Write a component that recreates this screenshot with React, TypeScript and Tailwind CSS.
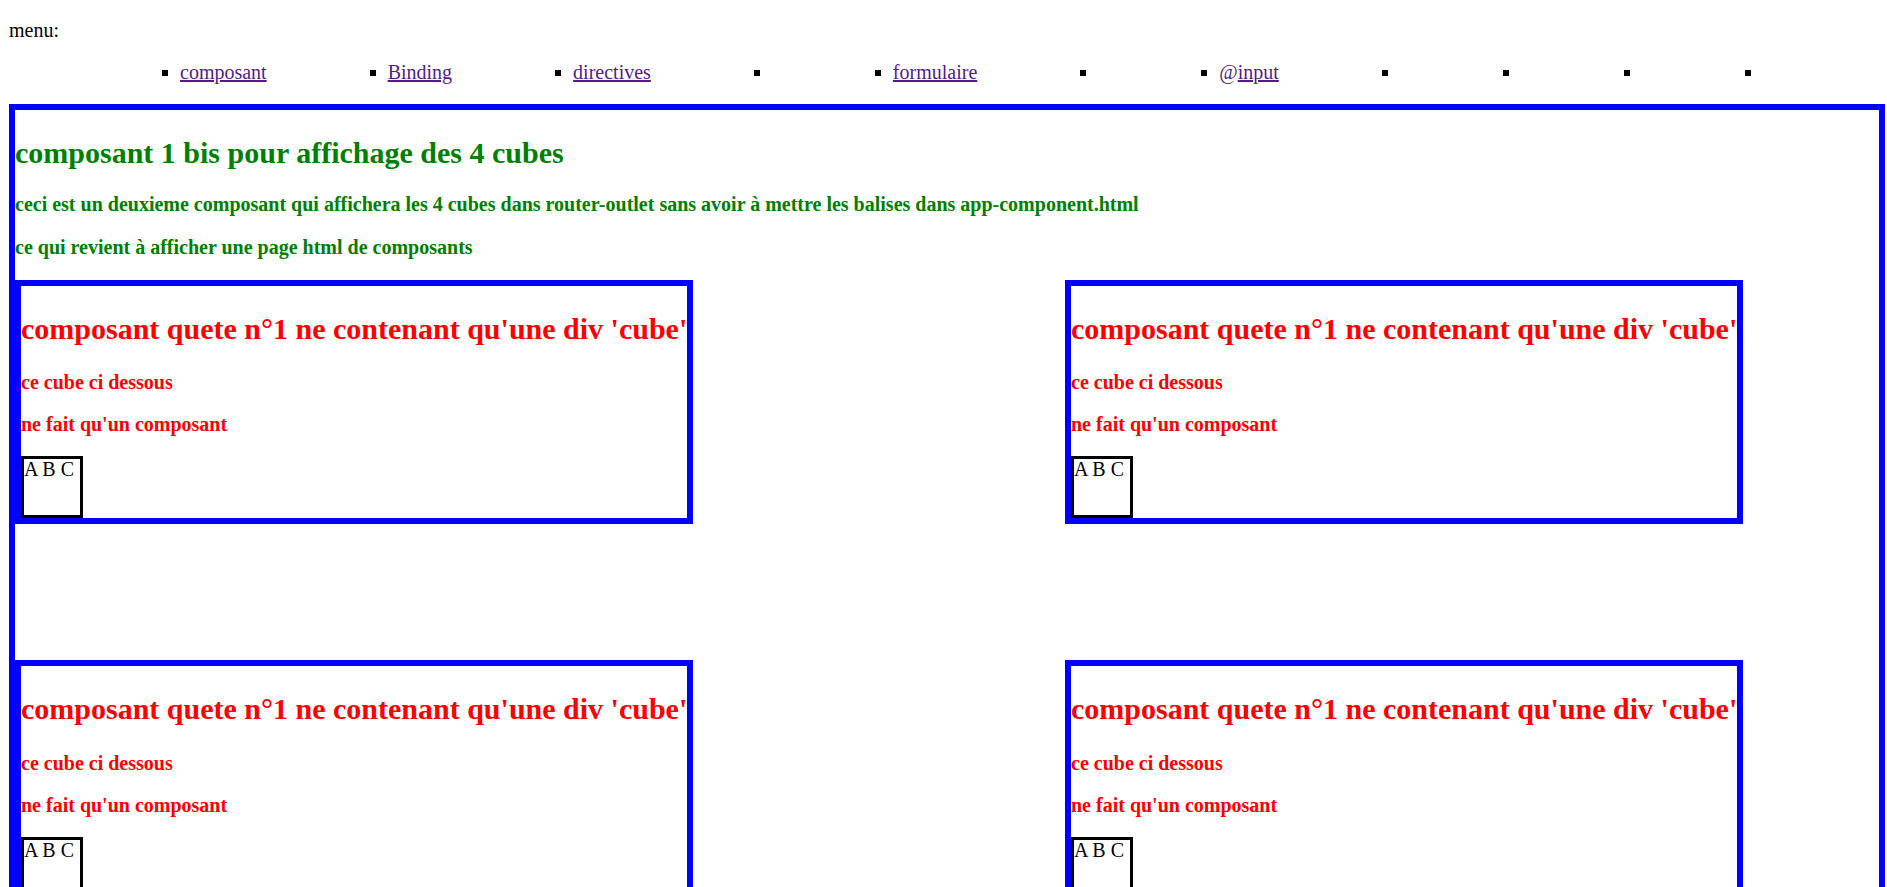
const menuItems = ["composant", "Binding", "directives", "", "formulaire", "", "@input", "", "", "", ""];

const MenuItem = ({ label }: { label: string }) => {
  const at = label.startsWith("@");
  const text = at ? label.slice(1) : label;
  return (
    <li className="flex items-start">
      <span className="w-[18px] pt-[9px]">
        <span className="block w-[6px] h-[6px] bg-black" />
      </span>
      {label && (
        <span className="text-[#551a8b]">
          {at && <span>@</span>}
          <a href="#" className="underline text-[#551a8b]">
            {text}
          </a>
        </span>
      )}
    </li>
  );
};

const Cube = () => (
  <div className="w-[62px] h-[62px] border-[3px] border-black text-black font-normal text-[20px] leading-none">
    A B C
  </div>
);

const QueteCard = () => (
  <div className="w-fit border-[6px] border-[#0000ff] text-[#ff0000] font-bold">
    <h2 className="mt-[26px] text-[30px] leading-[1.15]">
      composant quete n°1 ne contenant qu'une div 'cube'
    </h2>
    <h4 className="mt-[25px] text-[20px] leading-[1.15]">ce cube ci dessous</h4>
    <h4 className="mt-[19px] text-[20px] leading-[1.15]">ne fait qu'un composant</h4>
    <div className="mt-[20px]">
      <Cube />
    </div>
  </div>
);

export default function App() {
  return (
    <div className="min-h-screen bg-white text-black font-['Liberation_Serif',serif] text-[20px] leading-[1.15] overflow-hidden">
      <p className="pt-[19px] pl-[9px]">menu:</p>

      <ul className="mt-[19px] pl-[162px] flex gap-[103px]">
        {menuItems.map((m, i) => (
          <MenuItem key={i} label={m} />
        ))}
      </ul>

      {/* router-outlet : composant 1 bis */}
      <div className="mt-[20px] ml-[9px] w-[1876px] border-[6px] border-[#0000ff]">
        <h2 className="mt-[26px] text-[30px] leading-[1.15] font-bold text-[#008000]">
          composant 1 bis pour affichage des 4 cubes
        </h2>
        <h4 className="mt-[22px] text-[20px] leading-[1.15] font-bold text-[#008000]">
          ceci est un deuxieme composant qui affichera les 4 cubes dans router-outlet sans avoir à mettre les balises dans app-component.html
        </h4>
        <h4 className="mt-[20px] text-[20px] leading-[1.15] font-bold text-[#008000]">
          ce qui revient à afficher une page html de composants
        </h4>

        <div className="mt-[21px] grid grid-cols-[1050px_auto] gap-y-[136px] pb-[40px]">
          <QueteCard />
          <QueteCard />
          <QueteCard />
          <QueteCard />
        </div>
      </div>
    </div>
  );
}
